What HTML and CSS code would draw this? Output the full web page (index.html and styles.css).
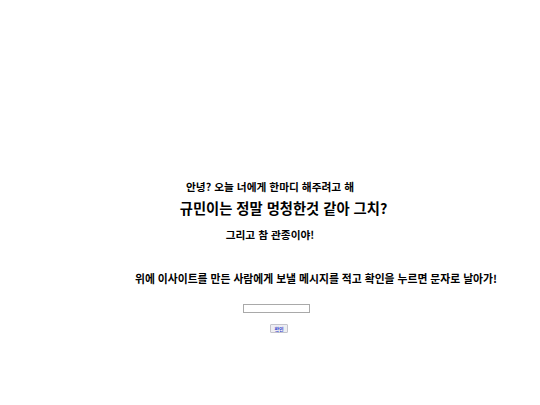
FILE: index.html
```html
<!DOCTYPE html>
<html lang="ko">
<head>
<meta charset="utf-8">
<link rel="stylesheet" href="styles.css">
</head>
<body>
<main class="page">
  <p class="line l1">안녕? 오늘 너에게 한마디 해주려고 해</p>
  <p class="line l2">규민이는 정말 멍청한것 같아 그치?</p>
  <p class="line l3">그리고 참 관종이야!</p>
  <p class="line l4">위에 이사이트를 만든 사람에게 보낼 메시지를 적고 확인을 누르면 문자로 날아가!</p>
  <form class="form">
    <input class="msg" type="text">
    <button class="btn" type="button">확인</button>
  </form>
</main>
</body>
</html>
```
FILE: styles.css
```css
html, body {
  margin: 0;
  padding: 0;
  background: #fff;
}
.page {
  width: 540px;
  height: 405px;
  padding-top: 180px;
  box-sizing: border-box;
  font-family: "Noto Sans CJK KR", "Noto Sans", sans-serif;
  font-weight: bold;
  color: #000;
}
.line {
  margin: 0;
  text-align: center;
  white-space: nowrap;
}
.l1 {
  font-size: 10.7px;
  line-height: 14px;
  height: 14px;
}
.l2 {
  font-size: 14.3px;
  line-height: 16px;
  height: 16px;
  margin-top: 6px;
  padding-left: 27px;
}
.l3 {
  font-size: 10.7px;
  line-height: 14px;
  height: 14px;
  margin-top: 12px;
  padding-left: 0;
}
.l4 {
  font-size: 10.8px;
  line-height: 14px;
  height: 14px;
  margin-top: 29px;
  padding-left: 92px;
}
.form {
  display: flex;
  flex-direction: column;
  align-items: center;
  margin: 0;
  padding-top: 19px;
}
.msg {
  width: 67px;
  height: 9px;
  box-sizing: border-box;
  margin: 0 0 0 12px;
  padding: 0;
  border: 1px solid #a9a9a9;
  background: #fff;
}
.btn {
  width: 18px;
  height: 9px;
  box-sizing: border-box;
  margin: 11px 0 0 18px;
  padding: 0;
  font-family: "Noto Sans CJK KR", sans-serif;
  font-size: 5px;
  line-height: 7px;
  font-weight: bold;
  color: #3344cc;
  background: #eeeef2;
  border: 1px solid #c4c4cc;
  border-radius: 1px;
}
```
